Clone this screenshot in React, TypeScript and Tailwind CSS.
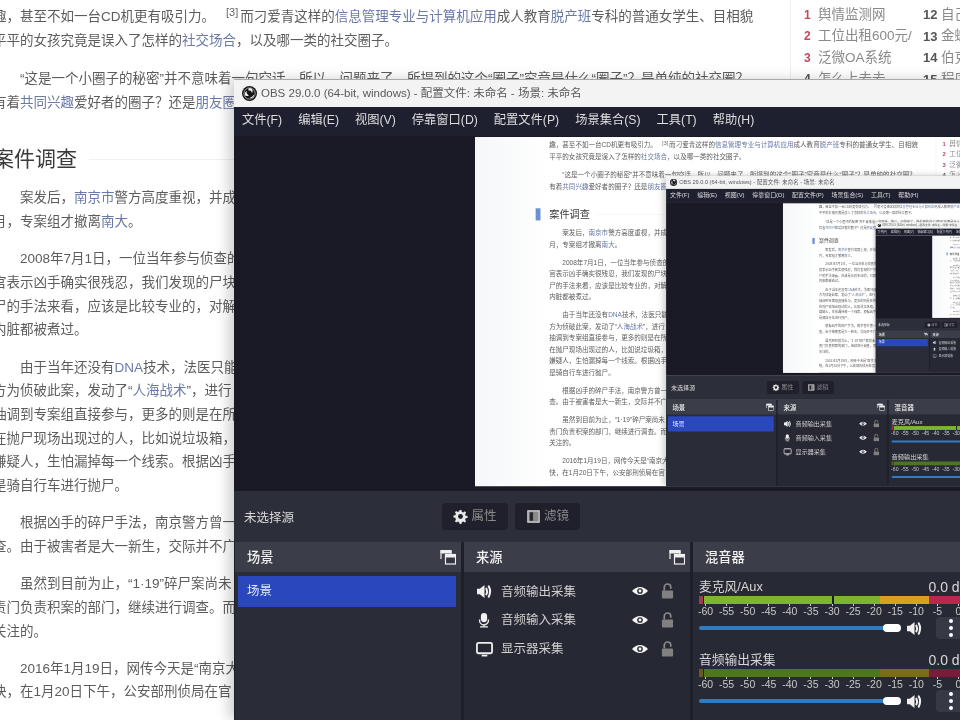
import type { ReactNode } from "react";

const Lk = ({ children }: { children: ReactNode }) => (
  <span className="text-[#6a7aa8]">{children}</span>
);

const Line = ({ children, indent }: { children: ReactNode; indent?: boolean }) => (
  <div className={indent ? "pl-[27px] whitespace-nowrap" : "whitespace-nowrap"}>{children}</div>
);

const Para = ({ children }: { children: ReactNode }) => (
  <div className="mb-[13.5px]">{children}</div>
);

function Article() {
  return (
    <div className="w-[797px] pt-[5px] text-[13.5px] leading-[23.7px] text-[#5c5c5c]">
      <div className="mb-[14.5px]">
        <Line>
          趣，甚至不如一台CD机更有吸引力。<span className="inline-block w-[11px]" />
          <sup className="text-[11px] text-[#666]">[3]</sup>
          <span className="inline-block w-[2px]" />而刁爱青这样的
          <Lk>信息管理专业与计算机应用</Lk>成人教育<Lk>脱产班</Lk>专科的普通女学生、目相貌
        </Line>
        <Line>
          平平的女孩究竟是误入了怎样的<Lk>社交场合</Lk>，以及哪一类的社交圈子。
        </Line>
      </div>
      <Para>
        <Line indent>“这是一个小圈子的秘密”并不意味着一句空话，所以，问题来了，所提到的这个“圈子”究竟是什么“圈子”？是单纯的社交圈？</Line>
        <Line>
          有着<Lk>共同兴趣</Lk>爱好者的圈子？还是<Lk>朋友圈</Lk>
        </Line>
      </Para>
      <div className="flex items-center h-[30px] -ml-[28px] mt-[30px] mb-[12px]">
        <div className="w-[10px] h-[25px] bg-[#6a90d8] mr-[18px]" />
        <h2 className="text-[21px] font-normal text-[#3a3a3a]">案件调查</h2>
        <div className="flex-1 h-px bg-[#f0f0f0] ml-[12px]" />
      </div>
      <Para>
        <Line indent>
          案发后，<Lk>南京市</Lk>警方高度重视，并成立专案组
        </Line>
        <Line>
          月，专案组才撤离<Lk>南大</Lk>。
        </Line>
      </Para>
      <Para>
        <Line indent>2008年7月1日，一位当年参与侦查的</Line>
        <Line>官表示凶手确实很残忍，我们发现的尸块</Line>
        <Line>尸的手法来看，应该是比较专业的，对解</Line>
        <Line>内脏都被煮过。</Line>
      </Para>
      <Para>
        <Line indent>
          由于当年还没有<Lk>DNA</Lk>技术，法医只能
        </Line>
        <Line>
          方为侦破此案，发动了“<Lk>人海战术</Lk>”，进行
        </Line>
        <Line>抽调到专案组直接参与，更多的则是在所</Line>
        <Line>在抛尸现场出现过的人，比如说垃圾箱，</Line>
        <Line>嫌疑人，生怕漏掉每一个线索。根据凶手</Line>
        <Line>是骑自行车进行抛尸。</Line>
      </Para>
      <Para>
        <Line indent>根据凶手的碎尸手法，南京警方曾一</Line>
        <Line>查。由于被害者是大一新生，交际并不广</Line>
      </Para>
      <Para>
        <Line indent>虽然到目前为止，“1·19”碎尸案尚未</Line>
        <Line>责门负责积案的部门，继续进行调查。而</Line>
        <Line>关注的。</Line>
      </Para>
      <Para>
        <Line indent>2016年1月19日，网传今天是“南京大</Line>
        <Line>快，在1月20日下午，公安部刑侦局在官</Line>
      </Para>
    </div>
  );
}

const HOT = [
  ["1", "舆情监测网", "12", "自己"],
  ["2", "工位出租600元/", "13", "金蝶"],
  ["3", "泛微OA系统", "14", "伯克"],
  ["4", "怎么上去去", "15", "程序"],
];

function Sidebar() {
  return (
    <div className="flex-1 h-[240px] border-l border-[#eeeeee] pl-[13px] pt-[4px] text-[13.5px] text-[#8a8a8a]">
      {HOT.map((r, i) => (
        <div key={r[0]} className="flex h-[21.5px] items-center whitespace-nowrap">
          <span className={i < 3 ? "w-[14px] text-[12px] font-bold text-[#c4475c]" : "w-[14px] text-[12px] font-bold text-[#555]"}>
            {r[0]}
          </span>
          <span className="w-[105px]">{r[1]}</span>
          <span className="w-[18px] text-[13px] font-bold text-[#555]">{r[2]}</span>
          <span>{r[3]}</span>
        </div>
      ))}
    </div>
  );
}

function ObsLogo() {
  return (
    <svg viewBox="0 0 24 24" className="w-[15px] h-[15px]">
      <circle cx="12" cy="12" r="12" fill="#151515" />
      <circle cx="12" cy="12" r="9" fill="none" stroke="#f2f2f2" strokeWidth="1" />
      <path d="M12 3a5 5 0 0 1 4 8 5 5 0 0 0-6-4 4 4 0 0 1 2-4zM5 15a5 5 0 0 1 3-7 5 5 0 0 0 3 7 5 5 0 0 1-6 0zM19 16a5 5 0 0 1-8 2 5 5 0 0 0 7-4 4 4 0 0 1 1 2z" fill="#f2f2f2" />
    </svg>
  );
}

function DockIcon() {
  return (
    <svg viewBox="0 0 16 16" className="w-[16px] h-[16px]" fill="none" stroke="#f0f0f0">
      <path d="M1 10V1.5h10V5" strokeWidth="1.2" />
      <path d="M1 1.5h10V4H1z" fill="#f0f0f0" />
      <rect x="5.5" y="5.5" width="10" height="9.5" fill="#333640" strokeWidth="1.2" />
      <path d="M5.5 5.5h10V8h-10z" fill="#f0f0f0" />
    </svg>
  );
}

function Speaker({ className }: { className: string }) {
  return (
    <svg viewBox="0 0 18 16" className={className} fill="none">
      <path d="M1 5h3l5-4v14l-5-4H1z" fill="#f0f0f0" />
      <path d="M11 5q1.6 3 0 6M13.5 2.5q3 5.5 0 11" stroke="#f0f0f0" strokeWidth="2.2" strokeLinecap="round" />
    </svg>
  );
}

function Mic() {
  return (
    <svg viewBox="0 0 16 18" className="w-[16px] h-[16px]" fill="none">
      <rect x="4.5" y="1" width="7" height="10.5" rx="3.5" fill="#f0f0f0" />
      <path d="M3 8.5v1a5 5 0 0 0 10 0v-1M8 14.5V16M3.5 16.8h9" stroke="#f0f0f0" strokeWidth="1.5" />
    </svg>
  );
}

function Monitor() {
  return (
    <svg viewBox="0 0 18 16" className="w-[17px] h-[16px]" fill="none">
      <rect x="1" y="1.5" width="16" height="11" rx="1.5" stroke="#f0f0f0" strokeWidth="1.9" />
      <path d="M6 15h6" stroke="#f0f0f0" strokeWidth="1.8" />
    </svg>
  );
}

function Eye() {
  return (
    <svg viewBox="0 0 18 12" className="w-[16px] h-[12px]">
      <path d="M0 6q9-9 18 0-9 9-18 0z" fill="#f5f5f5" />
      <circle cx="9" cy="6" r="3.2" fill="#2a2d37" />
      <circle cx="9" cy="6" r="1.6" fill="#f5f5f5" />
    </svg>
  );
}

function Lock() {
  return (
    <svg viewBox="0 0 14 17" className="w-[13px] h-[16px]" fill="none">
      <path d="M3.5 8V4.5a3.5 3.5 0 0 1 7 0V6" stroke="#8a8a8a" strokeWidth="1.8" />
      <rect x="1" y="8" width="12" height="8.5" rx="1" fill="#808080" />
    </svg>
  );
}

const TICKS = ["-60", "-55", "-50", "-45", "-40", "-35", "-30", "-25", "-20", "-15", "-10", "-5", "0"];

function MixerRow({ name, dim }: { name: string; dim?: boolean }) {
  return (
    <div className="w-[276px] mb-[11px] pl-[6px]">
      <div className="flex h-[20px] items-center justify-between text-[12.75px] text-[#d8d8d8]">
        <span>{name}</span>
        <span className="text-[14px]">0.0 dB</span>
      </div>
      <div className="relative flex h-[8px] -mt-[1px] bg-[#20222a]">
        <div className={dim ? "w-[4px] bg-[#6b5a20] mr-px" : "w-[4px] bg-[#a03a50] mr-px"} />
        <div className={dim ? "w-[176px] bg-[#4d7526]" : "w-[176px] bg-[#7db52f]"} />
        <div className={dim ? "w-[49px] bg-[#7a6a22]" : "w-[49px] bg-[#d8a11f]"} />
        <div className={dim ? "flex-1 bg-[#72203a]" : "flex-1 bg-[#b8284e]"} />
        {!dim && <div className="absolute left-[133px] top-0 w-[2px] h-[8px] bg-[#14200a]" />}
      </div>
      <div className="flex h-[13px] -ml-[4px]">
        {TICKS.map((t) => (
          <div key={t} className="flex w-[21.8px] flex-col items-center">
            <div className="w-px h-[2px] bg-[#c8c8c8]" />
            <div className="text-[10.5px] leading-[11px] text-[#c8c8c8]">{t}</div>
          </div>
        ))}
      </div>
      <div className="flex h-[22px] items-center">
        <div className="relative w-[202px] h-[4px] rounded-full bg-[#2f7cc4]">
          <div className="absolute right-0 -top-[2px] w-[18px] h-[8px] rounded-sm bg-white" />
        </div>
        <div className="ml-[5px] mr-[13px]">
          <Speaker className="w-[17px] h-[15px]" />
        </div>
        <div className="flex flex-col items-center justify-center gap-[3px] w-[30px] h-[22px] rounded bg-[#373a44]">
          <div className="w-[4px] h-[4px] rounded-full bg-white" />
          <div className="w-[4px] h-[4px] rounded-full bg-white" />
          <div className="w-[4px] h-[4px] rounded-full bg-white" />
        </div>
      </div>
    </div>
  );
}

const DockHead = ({ title, icon }: { title: string; icon?: boolean }) => (
  <div className="flex h-[30px] items-center justify-between pl-[12px] pr-[5px] bg-[#3b3e48] text-[13.25px] font-medium text-[#f0f0f0]">
    <span className="mt-px">{title}</span>
    {icon && <DockIcon />}
  </div>
);

const SOURCES = [
  { name: "音频输出采集", icon: <Speaker className="w-[17px] h-[15px]" /> },
  { name: "音频输入采集", icon: <Mic /> },
  { name: "显示器采集", icon: <Monitor /> },
];

function ObsWindow({ depth }: { depth: number }) {
  return (
    <div className="absolute left-[394px] top-[79px] w-[886px] h-[641px] flex flex-col border-t border-[#a8a8a8] shadow-[-6px_0_12px_rgba(0,0,0,0.18)]">
      <div className="flex h-[27px] shrink-0 items-center gap-[4px] pl-[8px] bg-[#f3f3f3] text-[11.5px] text-[#5a5a5a] whitespace-nowrap">
        <ObsLogo />
        <span className="mt-px">OBS 29.0.0 (64-bit, windows) - 配置文件: 未命名 - 场景: 未命名</span>
      </div>
      <div className="flex h-[29px] shrink-0 items-center gap-[16px] pl-[8px] pb-[2px] bg-[#1e2030] text-[12.25px] text-[#dedede] whitespace-nowrap">
        <span>文件(F)</span>
        <span>编辑(E)</span>
        <span>视图(V)</span>
        <span>停靠窗口(D)</span>
        <span>配置文件(P)</span>
        <span>场景集合(S)</span>
        <span>工具(T)</span>
        <span>帮助(H)</span>
      </div>
      <div className="relative h-[355px] shrink-0 overflow-hidden bg-[#191a26]">
        {depth > 0 && (
          <div className="absolute left-[241px] top-px w-[1280px] h-[720px] origin-top-left scale-[0.485]">
            <Screen depth={depth - 1} />
          </div>
        )}
      </div>
      <div className="flex h-[51px] shrink-0 items-center bg-[#2c2f39] pl-[10px] text-[12.5px] text-[#d8d8d8]">
        <span className="w-[198px] mt-[3px]">未选择源</span>
        <div className="flex h-[27px] w-[66px] items-center justify-center gap-[3px] rounded bg-[#1f202c] text-[#8a8a8a]">
          <svg viewBox="0 0 16 16" className="w-[15px] h-[15px]">
            <path d="M7 1h2l.4 2 1.5.6 1.7-1.1 1.4 1.4-1.1 1.7.6 1.5 2 .4v2l-2 .4-.6 1.5 1.1 1.7-1.4 1.4-1.7-1.1-1.5.6-.4 2H7l-.4-2-1.5-.6-1.7 1.1-1.4-1.4 1.1-1.7L2.5 9.4l-2-.4V7l2-.4.6-1.5L2 3.4 3.4 2l1.7 1.1 1.5-.6z" fill="#e8e8e8" />
            <circle cx="8" cy="8" r="2.6" fill="#1f202c" />
          </svg>
          <span>属性</span>
        </div>
        <div className="ml-[7px] flex h-[27px] w-[65px] items-center justify-center gap-[3px] rounded bg-[#1f202c] text-[#8a8a8a]">
          <svg viewBox="0 0 16 16" className="w-[15px] h-[15px]">
            <rect x="2" y="2" width="12" height="12" fill="#8a8a8a" stroke="#d0d0d0" strokeWidth="1.4" />
            <rect x="4" y="3.5" width="3.5" height="9" fill="#26272f" />
          </svg>
          <span>滤镜</span>
        </div>
      </div>
      <div className="flex flex-1 gap-[3px] bg-[#1d1f29] pl-px">
        <div className="w-[226px] bg-[#2a2d37]">
          <DockHead title="场景" icon />
          <div className="mt-[4px] ml-[3px] flex h-[31px] w-[218px] items-center rounded-[1px] bg-[#2a47bd] pl-[9px] text-[12.5px] text-[#e6ecff]">
            场景
          </div>
        </div>
        <div className="w-[226px] bg-[#262833]">
          <DockHead title="来源" icon />
          <div className="pt-[5px]">
            {SOURCES.map((s) => (
              <div key={s.name} className="flex h-[28.75px] items-center pl-[12px] text-[12.5px] text-[#d0d0d0]">
                <div className="flex w-[25px]">{s.icon}</div>
                <span className="w-[131px] mt-px">{s.name}</span>
                <Eye />
                <div className="ml-[13px]">
                  <Lock />
                </div>
              </div>
            ))}
          </div>
        </div>
        <div className="flex-1 bg-[#272a34]">
          <DockHead title="混音器" />
          <div className="pt-[5px]">
            <MixerRow name="麦克风/Aux" />
            <MixerRow name="音频输出采集" dim />
          </div>
        </div>
      </div>
    </div>
  );
}

function Screen({ depth }: { depth: number }) {
  return (
    <div className="relative flex w-[1280px] h-[720px] overflow-hidden bg-white font-['Liberation_Sans','Noto_Sans_CJK_SC',sans-serif]">
      <div className="w-[153px] h-full bg-[linear-gradient(to_right,#f5f7f8,#ffffff)]" />
      <Article />
      <Sidebar />
      {depth >= 0 && <ObsWindow depth={depth} />}
    </div>
  );
}

export default function App() {
  return (
    <div className="w-[960px] h-[720px] overflow-hidden blur-[0.5px]">
      <div className="-ml-[160px] w-[1280px]">
        <Screen depth={3} />
      </div>
    </div>
  );
}
